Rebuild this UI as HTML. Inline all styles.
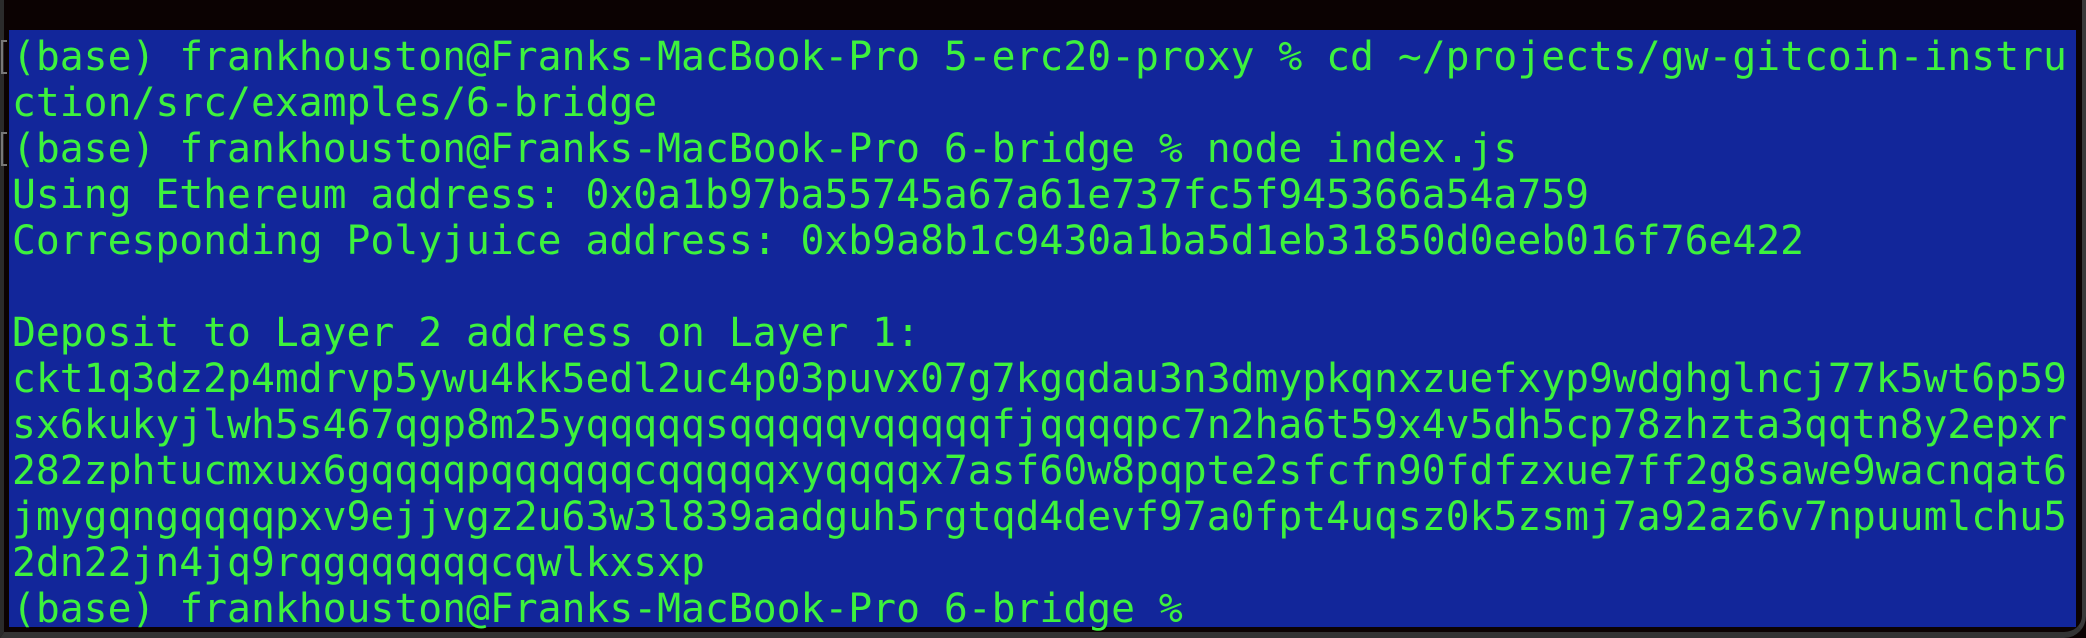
<!DOCTYPE html>
<html><head><style>
html,body{margin:0;padding:0;}
body{width:2086px;height:638px;background:#0b0202;position:relative;overflow:hidden;}
.frame{position:absolute;left:0;top:0;width:2086px;height:638px;box-sizing:border-box;border-left:4px solid #2b2b2b;border-right:4px solid #3a3a3a;border-bottom:6px solid #333;border-radius:0 0 22px 0;}
.blue{position:absolute;left:9px;top:30px;width:2067px;height:597px;background:#12269a;}
pre{position:absolute;left:12px;top:34px;margin:0;font-family:"DejaVu Sans Mono","Liberation Mono",monospace;font-size:39.7px;line-height:46px;color:#3df23d;white-space:pre;}
.br{position:absolute;left:1px;width:6px;height:34px;border:2px solid #777;border-right:none;box-sizing:border-box;}
</style></head><body>
<div class="frame"></div>
<div class="blue"></div>
<div class="br" style="top:40px"></div>
<div class="br" style="top:132px"></div>
<pre>(base) frankhouston@Franks-MacBook-Pro 5-erc20-proxy % cd ~/projects/gw-gitcoin-instru
ction/src/examples/6-bridge
(base) frankhouston@Franks-MacBook-Pro 6-bridge % node index.js
Using Ethereum address: 0x0a1b97ba55745a67a61e737fc5f945366a54a759
Corresponding Polyjuice address: 0xb9a8b1c9430a1ba5d1eb31850d0eeb016f76e422

Deposit to Layer 2 address on Layer 1:
ckt1q3dz2p4mdrvp5ywu4kk5edl2uc4p03puvx07g7kgqdau3n3dmypkqnxzuefxyp9wdghglncj77k5wt6p59
sx6kukyjlwh5s467qgp8m25yqqqqqsqqqqqvqqqqqfjqqqqpc7n2ha6t59x4v5dh5cp78zhzta3qqtn8y2epxr
282zphtucmxux6gqqqqpqqqqqqcqqqqqxyqqqqx7asf60w8pqpte2sfcfn90fdfzxue7ff2g8sawe9wacnqat6
jmygqngqqqqpxv9ejjvgz2u63w3l839aadguh5rgtqd4devf97a0fpt4uqsz0k5zsmj7a92az6v7npuumlchu5
2dn22jn4jq9rqgqqqqqqcqwlkxsxp
(base) frankhouston@Franks-MacBook-Pro 6-bridge %</pre>
</body></html>
